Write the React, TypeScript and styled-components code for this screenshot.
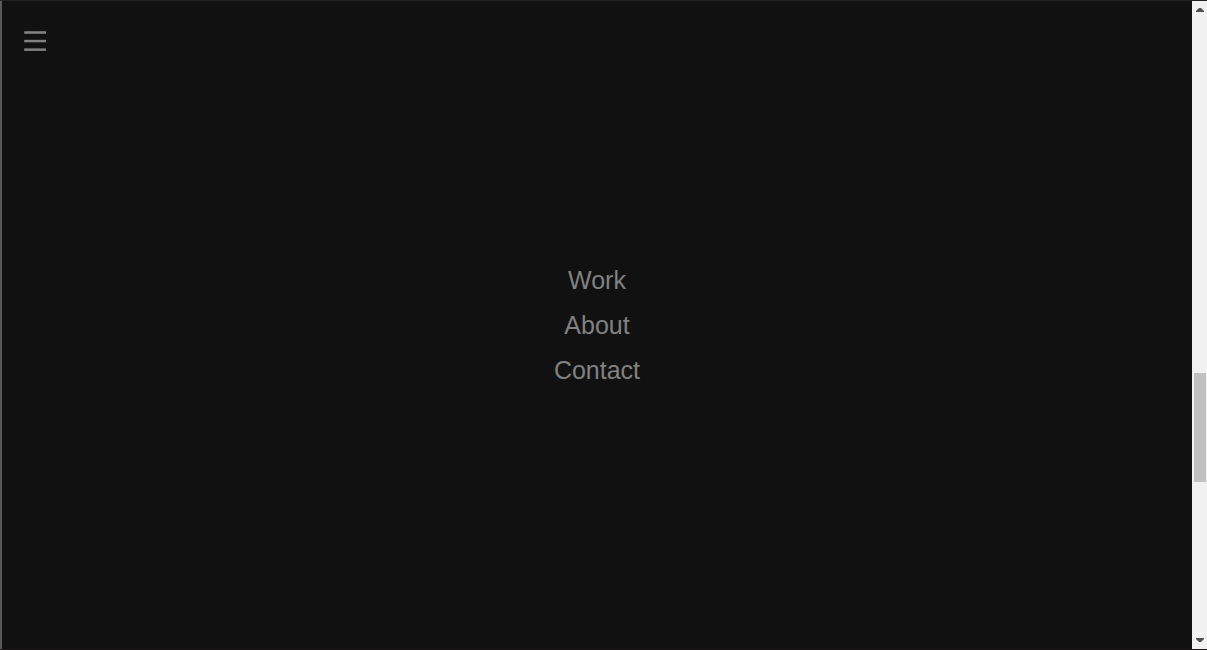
import React from "react";
import styled, { createGlobalStyle } from "styled-components";

const GlobalStyle = createGlobalStyle`
  *, *::before, *::after { box-sizing: border-box; }
  html { background: #111111; }
  body {
    margin: 0;
    font-family: "Liberation Sans", Arial, Helvetica, sans-serif;
    color: #818181;
  }
`;

const Frame = styled.div`
  display: flex;
  min-height: 100vh;
  border-top: 1px solid #222222;
  border-bottom: 1px solid #1c1518;
  background: #111111;
`;

const Overlay = styled.main`
  flex: 1;
  display: grid;
  border-left: 2px solid #5a5a5a;
`;

const MenuButton = styled.button`
  grid-area: 1 / 1;
  place-self: start;
  z-index: 1;
  display: flex;
  margin: 28px 20px;
  padding: 0 2px;
  border: 0;
  background: transparent;
  color: #818181;
  cursor: pointer;
`;

const MenuNav = styled.nav`
  grid-area: 1 / 1;
  place-self: center;
`;

const MenuList = styled.ul`
  margin: 0;
  padding: 0;
  list-style: none;
  text-align: center;
`;

const MenuLink = styled.a`
  display: block;
  font-size: 25px;
  line-height: 29px;
  padding: 8px;
  color: #818181;
  text-decoration: none;

  &:hover { color: #f1f1f1; }
`;

const ScrollBar = styled.aside`
  display: grid;
  width: 15px;
  grid-template-rows: 18px 354fr 109fr 149fr 18px;
  background: #f1f1f1;
`;

const ScrollButton = styled.button`
  display: grid;
  place-items: center;
  padding: 0;
  border: 0;
  background: transparent;
  color: #505050;
`;

const ScrollThumb = styled.div`
  grid-row: 3;
  margin: 0 1px 0 2px;
  background: #c1c1c1;
`;

const ScrollEnd = styled(ScrollButton)`
  grid-row: 5;
`;

const links = [
  { label: "Work", href: "#work" },
  { label: "About", href: "#about" },
  { label: "Contact", href: "#contact" },
];

export default function App() {
  return (
    <>
      <GlobalStyle />
      <Frame>
        <Overlay>
          <MenuButton type="button" aria-label="Menu">
            <svg width="22" height="24" viewBox="0 0 22 24" fill="currentColor" aria-hidden="true">
              <rect x="0.2" y="2.2" width="21.8" height="2.6" />
              <rect x="0.2" y="10.8" width="21.8" height="2.5" />
              <rect x="0.2" y="19.4" width="21.8" height="2.5" />
            </svg>
          </MenuButton>
          <MenuNav aria-label="Main">
            <MenuList>
              {links.map((link) => (
                <li key={link.href}>
                  <MenuLink href={link.href}>{link.label}</MenuLink>
                </li>
              ))}
            </MenuList>
          </MenuNav>
        </Overlay>
        <ScrollBar aria-label="Scroll bar">
          <ScrollButton type="button" aria-label="Scroll up">
            <svg width="8" height="4" viewBox="0 0 8 4" fill="currentColor" aria-hidden="true">
              <path d="M0 4V3L3 0h2l3 3v1z" />
            </svg>
          </ScrollButton>
          <ScrollThumb />
          <ScrollEnd type="button" aria-label="Scroll down">
            <svg width="8" height="4" viewBox="0 0 8 4" fill="currentColor" aria-hidden="true">
              <path d="M0 0h8v1L5 4H3L0 1z" />
            </svg>
          </ScrollEnd>
        </ScrollBar>
      </Frame>
    </>
  );
}
